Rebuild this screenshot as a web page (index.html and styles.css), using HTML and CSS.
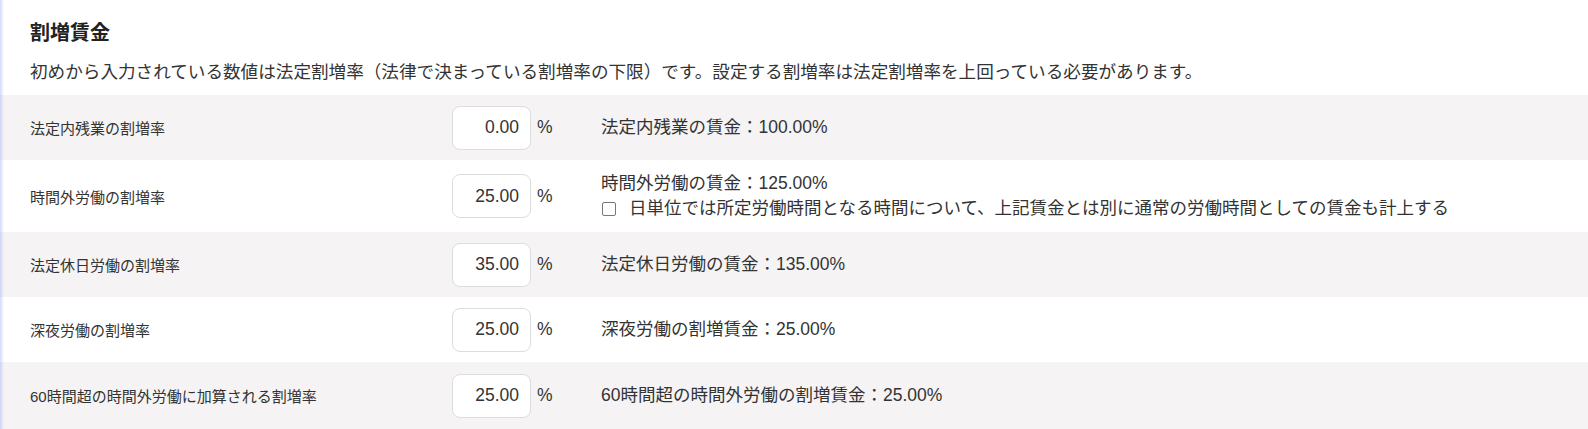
FILE: index.html
```html
<!DOCTYPE html>
<html lang="ja">
<head>
  <meta charset="utf-8">
  <title>割増賃金</title>
  <link rel="stylesheet" href="styles.css">
</head>
<body>
  <div class="page">
    <div class="section_head">
      <h2 class="section_title">割増賃金</h2>
      <p class="section_note">初めから入力されている数値は法定割増率（法律で決まっている割増率の下限）です。設定する割増率は法定割増率を上回っている必要があります。</p>
    </div>

    <form class="rate_list" name="premium_form">
      <div class="rate_row">
        <label class="rate_label" for="legal_overtime">法定内残業の割増率</label>
        <input class="rate_input" id="legal_overtime" type="text" value="0.00">
        <span class="rate_unit">%</span>
        <div class="rate_result">法定内残業の賃金：100.00%</div>
      </div>
      <div class="rate_row row_tall">
        <label class="rate_label" for="overtime">時間外労働の割増率</label>
        <input class="rate_input" id="overtime" type="text" value="25.00">
        <span class="rate_unit">%</span>
        <div class="rate_result">
          <div>時間外労働の賃金：125.00%</div>
          <label class="check_line"><input class="check_box" type="checkbox">日単位では所定労働時間となる時間について、上記賃金とは別に通常の労働時間としての賃金も計上する</label>
        </div>
      </div>
      <div class="rate_row">
        <label class="rate_label" for="holiday">法定休日労働の割増率</label>
        <input class="rate_input" id="holiday" type="text" value="35.00">
        <span class="rate_unit">%</span>
        <div class="rate_result">法定休日労働の賃金：135.00%</div>
      </div>
      <div class="rate_row">
        <label class="rate_label" for="midnight">深夜労働の割増率</label>
        <input class="rate_input" id="midnight" type="text" value="25.00">
        <span class="rate_unit">%</span>
        <div class="rate_result">深夜労働の割増賃金：25.00%</div>
      </div>
      <div class="rate_row">
        <label class="rate_label" for="over_sixty">60時間超の時間外労働に加算される割増率</label>
        <input class="rate_input" id="over_sixty" type="text" value="25.00">
        <span class="rate_unit">%</span>
        <div class="rate_result">60時間超の時間外労働の割増賃金：25.00%</div>
      </div>
    </form>
  </div>
</body>
</html>
```

FILE: styles.css
```css
*, ::before, ::after {
  box-sizing: border-box;
  margin: 0; padding: 0;
}

body {
  background: #fff;
  color: #333;
  font-family: "Liberation Sans", "Noto Sans CJK JP", sans-serif;
  font-size: 17.5px;
}

.page {
  min-height: 100vh;
}

/* 左端の薄い影（サイドバーとの境目）は見出しと各行の背景に重ねる */
.section_head, .rate_row {
  background-image: linear-gradient(to right, rgba(110, 140, 235, .3), rgba(110, 140, 235, 0) 4px);
}

.section_head {
  padding: 20px 30px 10px;
}
.section_title {
  font-size: 20px; font-weight: bold;
  line-height: 26px;
  color: #222;
}
.section_note {
  margin-top: 13px;
  font-size: 17.6px;
  line-height: 26px;
}

.rate_row {
  display: grid;
  grid-template-columns: 422px 79px 70px 1fr;
  align-items: center;
  height: 65px;
  padding-left: 30px;
}
.rate_row:nth-child(odd) {
  background-color: #f5f3f4;
}
.rate_row.row_tall {
  height: 72px;
}
.rate_row:last-child {
  height: 67px;
}

.rate_label {
  font-size: 15px;
}
.rate_input {
  width: 79px; height: 44px;
  padding: 0 11px 0 0;
  border: 1px solid #ddd; border-radius: 8px;
  background: #fff;
  color: #333;
  font: inherit;
  text-align: right;
  outline: 0;
}
.rate_unit {
  padding-left: 6px;
}
.rate_result {
  line-height: 25px;
}

.check_line {
  display: flex;
  align-items: center;
}
.check_box {
  appearance: none;
  width: 14px; height: 14px;
  margin: 0 13px 0 1px;
  border: 1px solid #777; border-radius: 2px;
  background: #fff;
}
```
